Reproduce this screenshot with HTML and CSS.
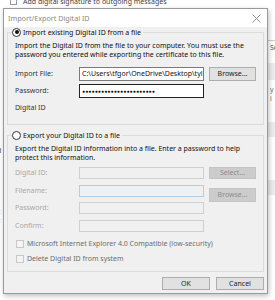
FILE: index.html
```html
<!DOCTYPE html>
<html lang="en">
<head>
  <meta charset="UTF-8">
  <title>Import/Export Digital ID</title>
  <link rel="stylesheet" href="styles.css">
</head>
<body>
  <div class="behind">
    <div class="behind-top"><span class="bg-check"></span>Add digital signature to outgoing messages</div>
    <div class="behind-line"></div>
    <div class="bg-text se">Se</div>
    <div class="bg-band b1"></div>
    <div class="bg-text yi">y i</div>
    <div class="bg-band b2"></div>
    <div class="bg-band b3"></div>
    <div class="bg-text l1">d</div>
    <div class="bg-text l2">c</div>
    <div class="bg-text l3">c</div>
  </div>

  <div class="dialog">
    <div class="titlebar">
      <span class="title">Import/Export Digital ID</span>
      <svg class="close" width="9" height="9" viewBox="0 0 9 9"><path d="M0.5 0.5 L8.5 8.5 M8.5 0.5 L0.5 8.5" stroke="#8a8a8a" stroke-width="0.9" fill="none"/></svg>
    </div>
    <div class="body">
      <div class="group g1">
        <div class="group-title"><span class="radio checked"></span>Import existing Digital ID from a file</div>
        <p class="desc">Import the Digital ID from the file to your computer. You must use the password you entered while exporting the certificate to this file.</p>
        <div class="form">
          <label>Import File:</label>
          <div class="input path">C:\Users\tfgor\OneDrive\Desktop\tyl</div>
          <div class="btn">Browse...</div>
          <label>Password:</label>
          <div class="input focus">●●●●●●●●●●●●●●●●●●●●●●●</div>
          <div></div>
        </div>
        <div class="sub-label">Digital ID</div>
      </div>

      <div class="group g2">
        <div class="group-title"><span class="radio"></span>Export your Digital ID to a file</div>
        <p class="desc">Export the Digital ID information into a file. Enter a password to help protect this information.</p>
        <div class="form disabled">
          <label>Digital ID:</label>
          <div class="input"></div>
          <div class="btn off">Select...</div>
          <label>Filename:</label>
          <div class="input blue"></div>
          <div class="btn off low">Browse...</div>
          <label>Password:</label>
          <div class="input"></div>
          <div></div>
          <label>Confirm:</label>
          <div class="input"></div>
          <div></div>
        </div>
        <div class="check-row first"><span class="check"></span>Microsoft Internet Explorer 4.0 Compatible (low-security)</div>
        <div class="check-row"><span class="check"></span>Delete Digital ID from system</div>
      </div>

      <div class="actions">
        <div class="btn act">OK</div>
        <div class="btn act">Cancel</div>
      </div>
    </div>
  </div>
</body>
</html>
```

FILE: styles.css
```css
* { margin: 0; padding: 0; box-sizing: border-box; }
body { width: 275px; height: 300px; overflow: hidden; background: #fff; font-family: "Noto Sans", "Open Sans", sans-serif; font-size: 7px; color: #111; position: relative; }

/* window behind the dialog */
.behind { position: absolute; inset: 0; background: #fff; }
.behind-top { position: absolute; left: 10px; top: -3px; color: #444; font-size: 7px; display: flex; align-items: center; gap: 6px; }
.bg-check { width: 7px; height: 7px; border: 1px solid #999; }
.behind-line { position: absolute; left: 268px; top: 40px; width: 7px; height: 1px; background: #ccc; }
.bg-text { position: absolute; color: #555; font-size: 7px; }
.se { left: 270px; top: 43px; }
.yi { left: 270px; top: 85px; color: #777; }
.l1 { left: -3px; top: 146px; }
.l2 { left: -3px; top: 207px; }
.l3 { left: -3px; top: 216px; }
.bg-band { position: absolute; left: 268px; width: 7px; background: #ececec; }
.b1 { top: 63px; height: 17px; }
.b2 { top: 122px; height: 15px; }
.b3 { top: 180px; height: 15px; }

/* dialog */
.dialog { position: absolute; left: 3px; top: 8px; width: 265px; height: 286px; border: 1px solid #9a9a9a; background: #f0f0f0; box-shadow: 1px 2px 5px rgba(0,0,0,0.25); display: flex; flex-direction: column; }
.titlebar { height: 18px; flex: none; background: #fff; display: flex; align-items: center; justify-content: space-between; padding: 0 6px 0 4px; }
.title { color: #8a8a8a; font-size: 7.2px; }
.body { padding: 5px 3px 0 3px; display: flex; flex-direction: column; }

.group { border: 1px solid #dcdcdc; padding: 0 7px; display: flex; flex-direction: column; flex: none; }
.g1 { height: 93px; }
.g2 { height: 137px; margin-top: 10px; }
.group-title { display: flex; align-items: center; gap: 2px; height: 10px; margin: -6px 0 0 -3px; padding-right: 2px; background: #f0f0f0; align-self: flex-start; color: #111; white-space: nowrap; }
.radio { width: 9px; height: 9px; border-radius: 50%; border: 1px solid #333; background: #fff; position: relative; }
.radio.checked::after { content: ""; position: absolute; left: 1.5px; top: 1.5px; width: 4px; height: 4px; border-radius: 50%; background: #111; }

.desc { margin-top: 4px; line-height: 9.4px; color: #111; }

.form { display: grid; grid-template-columns: 59px 125px 47px; column-gap: 5px; row-gap: 3px; margin-top: 7px; grid-auto-rows: 14px; }
.form label { line-height: 14px; color: #333; }
.input { border: 1px solid #7a7a7a; background: #fff; white-space: nowrap; overflow: hidden; line-height: 12px; padding-left: 2px; }
.input.focus { border-color: #222; font-size: 5px; letter-spacing: 0.15px; }
.sub-label { margin-top: 5px; line-height: 9px; color: #333; }

.btn { border: 1px solid #adadad; background: #e1e1e1; text-align: center; line-height: 12px; color: #222; }

.disabled { grid-auto-rows: 12px; row-gap: 5.7px; margin-top: 4px; }
.disabled label { color: #a8a8a8; line-height: 12px; }
.disabled .input { border-color: #cfcfcf; background: #f0f0f0; }
.disabled .input.blue { border-color: #b3cde6; }
.btn.off { background: #cccccc; border-color: #c4c4c4; color: #8c8c8c; line-height: 10px; }
.btn.low { margin: 3px 0 -3px; height: 14px; line-height: 12px; }

.check-row { display: flex; align-items: center; gap: 3px; height: 9px; margin-top: 6px; color: #6d6d6d; padding-left: 1px; white-space: nowrap; }
.check-row.first { margin-top: 7.5px; }
.check { width: 8px; height: 8px; border: 1px solid #c8c8c8; background: #f4f4f4; }

.actions { display: flex; justify-content: flex-end; gap: 6px; margin-top: 5px; }
.btn.act { width: 48px; height: 13px; line-height: 11px; }
```
